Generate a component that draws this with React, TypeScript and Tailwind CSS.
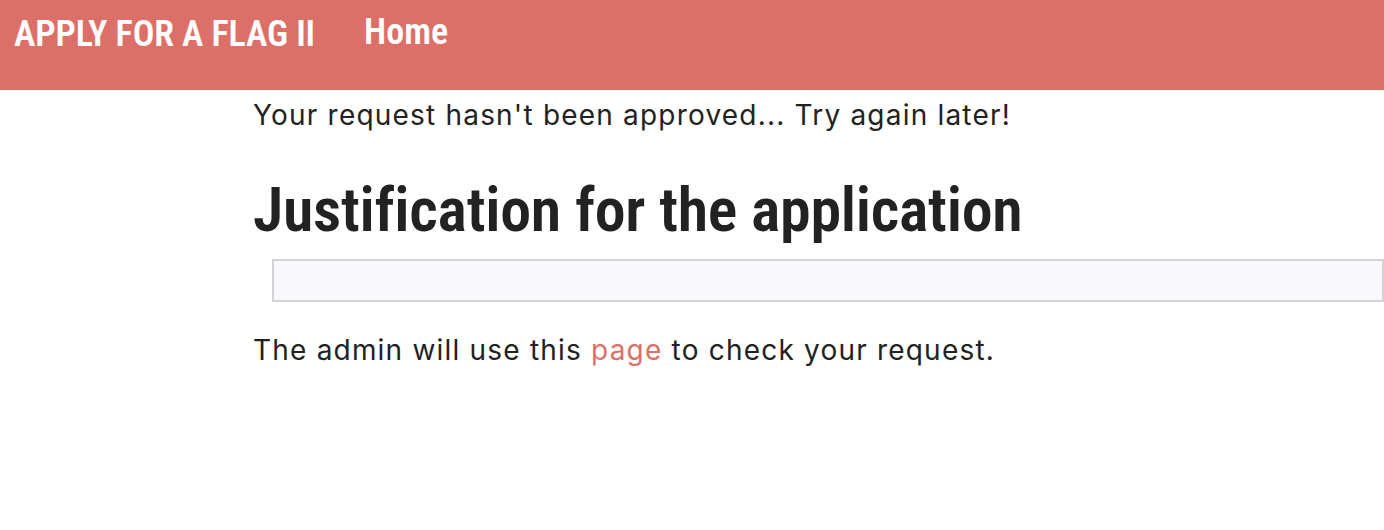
export default function App() {
  return (
    <div className="min-h-[530px] bg-white">
      <nav className="h-[90px] bg-[#dc7069] flex items-start pl-[14px] pt-[14px] gap-[49px] text-white font-semibold font-['Roboto',sans-serif] [font-stretch:condensed]">
        <span className="text-[36px] leading-[40px] tracking-[-0.1px]">APPLY FOR A FLAG II</span>
        <span className="text-[36px] leading-[40px] -mt-[2px]">Home</span>
      </nav>
      <main className="pl-[253px] text-[#222]">
        <p className="mt-[7px] text-[28px] leading-[36px] tracking-[1.2px] font-['Inter',sans-serif]">Your request hasn't been approved... Try again later!</p>
        <h1 className="mt-[41px] text-[62px] leading-[72px] font-semibold font-['Roboto',sans-serif] [font-stretch:condensed] tracking-[-0.3px] text-[#222]">Justification for the application</h1>
        <div className="ml-[19px] mt-[13px] h-[43px] border-2 border-[#d3d3d8] bg-[#f8f8fd]" />
        <p className="mt-[30px] text-[28px] leading-[36px] tracking-[1.2px] font-['Inter',sans-serif]">
          The admin will use this <a className="text-[#dc7069]">page</a> to check your request.
        </p>
      </main>
    </div>
  );
}
